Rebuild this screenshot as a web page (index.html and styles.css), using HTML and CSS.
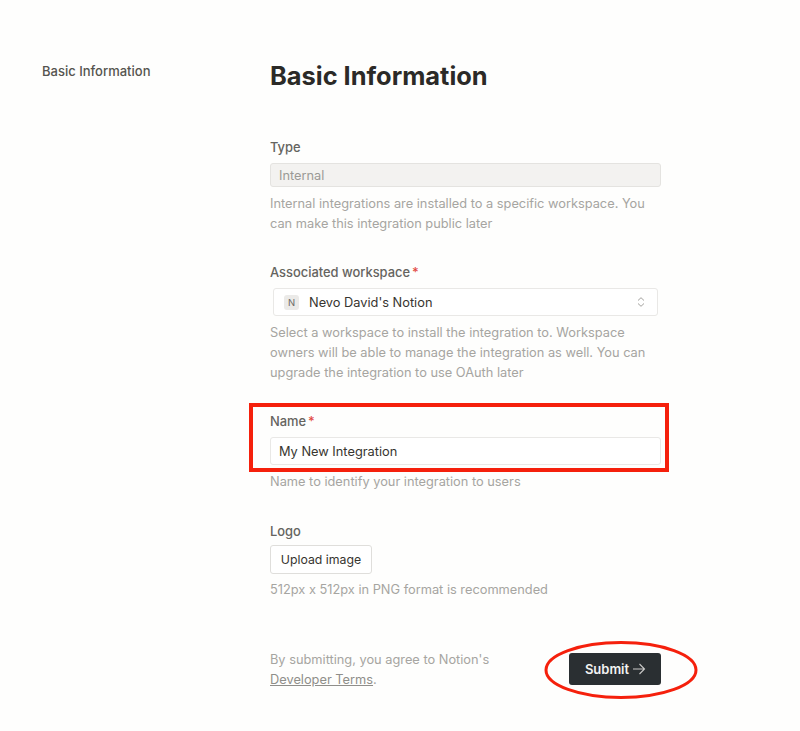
FILE: index.html
```html
<!DOCTYPE html>
<html lang="en">
<head>
<meta charset="utf-8">
<title>Basic Information</title>
<link rel="stylesheet" href="styles.css">
</head>
<body>
<div class="page">
  <nav class="side">Basic Information</nav>
  <main class="main">
    <h1 class="title">Basic Information</h1>
    <section class="field field-type">
      <div class="label">Type</div>
      <div class="input input-disabled">Internal</div>
      <p class="help">Internal integrations are installed to a specific workspace. You can make this integration public later</p>
    </section>
    <section class="field field-workspace">
      <div class="label">Associated workspace<span class="req">*</span></div>
      <div class="select">
        <span class="avatar">N</span>
        <span class="select-text">Nevo David's Notion</span>
        <svg class="chev" width="8" height="10" viewBox="0 0 8 10" fill="none" stroke="#a3a29e" stroke-width="1"><path d="M1 3.500 4 .7l3 2.800M1 6.500 4 9.300l3-2.800"/></svg>
      </div>
      <p class="help">Select a workspace to install the integration to. Workspace owners will be able to manage the integration as well. You can upgrade the integration to use OAuth later</p>
    </section>
    <section class="field field-name">
      <div class="label">Name<span class="req">*</span></div>
      <div class="input input-name">My New Integration</div>
      <p class="help help-name">Name to identify your integration to users</p>
      <div class="mark-rect"></div>
    </section>
    <section class="field field-logo">
      <div class="label">Logo</div>
      <div class="upload">Upload image</div>
      <p class="help help-logo">512px x 512px in PNG format is recommended</p>
    </section>
    <footer class="foot">
      <p class="terms">By submitting, you agree to Notion's <a class="terms-link">Developer Terms</a>.</p>
      <div class="submit-wrap">
        <div class="submit"><span class="submit-text">Submit</span>
          <svg width="14" height="12" viewBox="0 0 14 12" fill="none" stroke="#c9c9c8" stroke-width="1.100"><path d="M1 6h11.500M7.500 1l5 5-5 5"/></svg>
        </div>
        <svg class="mark-oval" width="154" height="60" viewBox="0 0 154 60" fill="none"><ellipse cx="77" cy="30" rx="75" ry="27.500" stroke="#f5200c" stroke-width="3"/></svg>
      </div>
    </footer>
  </main>
</div>
</body>
</html>
```
FILE: styles.css
```css
* { box-sizing: border-box; }
html, body { margin: 0; padding: 0; background: #fefefd; }
body { font-family: Inter, "Liberation Sans", sans-serif; color: #37352f; height: 731px; overflow: hidden; }
.page { display: flex; padding-top: 61px; padding-left: 42px; }
.side { width: 228px; font-size: 13px; line-height: 20px; font-weight: 500; color: #55544f; }
.main { width: 391px; }
.title { margin: 0; font-size: 25.400px; line-height: 30px; font-weight: 700; color: #2b2a27; }
.label { font-size: 12.900px; line-height: 18px; font-weight: 500; color: #65645f; }
.req { color: #e2483d; margin-left: 2px; }
.help { margin: 0; font-size: 12.800px; line-height: 20px; color: #a6a5a1; }
.field-type { margin-top: 48px; }
.field-workspace { margin-top: 30px; }
.field-name { margin-top: 30px; position: relative; }
.field-logo { margin-top: 31px; }
.input { margin-top: 6px; height: 24px; padding: 0 8px; font-size: 12.800px; line-height: 24px; border: 1px solid #e9e8e6; border-radius: 3px; background: #fff; color: #37352f; }
.input-name { height: 28px; line-height: 28px; }
.input-disabled { background: #f3f2f0; color: #9b9a96; border-color: #e4e3e0; }
.field-type .help { margin-top: 7px; }
.field-workspace .help { margin-top: 7px; }
.select { display: flex; align-items: center; margin: 6px 3px 0 3px; height: 28px; padding: 0 12px 0 10px; border: 1px solid #e9e8e6; border-radius: 3px; background: #fff; font-size: 12.800px; color: #37352f; }
.avatar { display: flex; align-items: center; justify-content: center; width: 15px; height: 15px; margin-right: 10px; border-radius: 3px; background: #ebeae8; font-size: 9.500px; color: #6b6a66; }
.select-text { flex: 1; }
.help-name { margin-top: 7px; }
.mark-rect { position: absolute; left: -21px; top: -10px; width: 420px; height: 69px; border: 4px solid #f5200c; }
.upload { margin-top: 4px; width: 102px; height: 29px; display: flex; align-items: center; justify-content: center; border: 1px solid #dfdedb; border-radius: 3px; background: #fff; font-size: 12.300px; color: #37352f; }
.help-logo { margin-top: 6px; }
.foot { display: flex; justify-content: space-between; margin-top: 50px; }
.terms { margin: 0; width: 240px; font-size: 12.800px; line-height: 20px; color: #a6a5a1; }
.terms-link { text-decoration: underline; color: #8f8e8a; }
.submit-wrap { position: relative; margin-top: 3px; }
.submit { display: flex; align-items: center; justify-content: center; gap: 3px; width: 92px; height: 32px; padding-left: 1px; background: #2a2f32; border-radius: 3px; color: #f2f2f1; font-size: 13px; font-weight: 600; }
.mark-oval { position: absolute; left: -25px; top: -13px; }
```
